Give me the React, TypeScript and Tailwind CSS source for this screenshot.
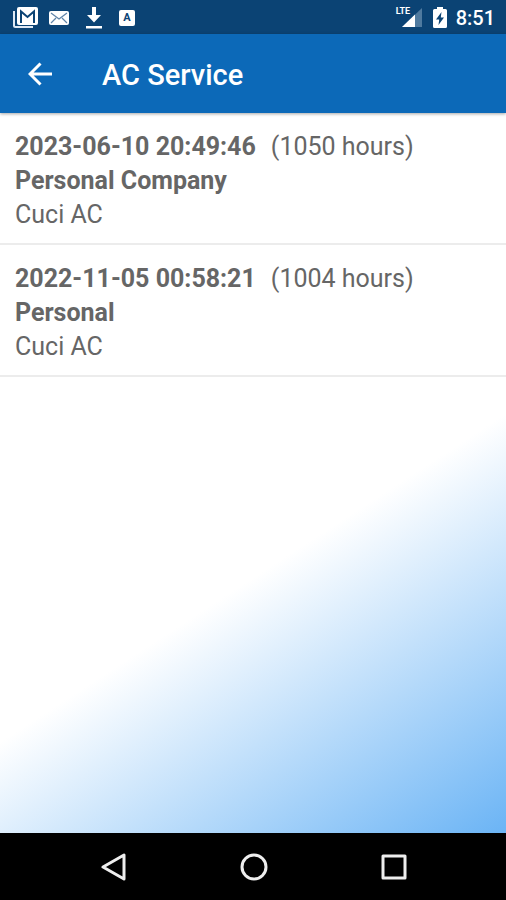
type Service = {
    date: string;
    hours: number;
    customer: string;
    job: string;
};

const services: Service[] = [
    {
        date: '2023-06-10 20:49:46',
        hours: 1050,
        customer: 'Personal Company',
        job: 'Cuci AC',
    },
    {
        date: '2022-11-05 00:58:21',
        hours: 1004,
        customer: 'Personal',
        job: 'Cuci AC',
    },
];

function StatusBar() {
    return (
        <div className="flex h-[34px] shrink-0 items-center justify-between bg-[#0b4374] pt-px pr-[11px] pl-[13px] text-white">
            <div className="flex items-center">
                <svg className="h-[22px] w-[25px]" viewBox="0 0 25 22">
                    <path
                        d="M1 4v14.500q0 1.500 1.500 1.500H20"
                        fill="none"
                        stroke="#dfe9f5"
                        strokeWidth="2"
                    />
                    <rect x="4" y="0" width="21" height="18" rx="2" fill="#fff" />
                    <path
                        d="M8 16V4.500l6.500 5.500L21 4.500V16"
                        fill="none"
                        stroke="#0b4374"
                        strokeWidth="2"
                    />
                </svg>
                <svg
                    className="ml-[11px] h-[14px] w-5"
                    viewBox="0 0 20 14"
                >
                    <rect width="20" height="14" rx="2" fill="#fff" />
                    <path
                        d="M2 2l8 6 8-6M2 12l5-5M18 12l-5-5"
                        fill="none"
                        stroke="#5f84a8"
                        strokeWidth="1.200"
                    />
                </svg>
                <svg
                    className="ml-4 h-[22px] w-[18px]"
                    viewBox="0 0 18 22"
                    fill="#fff"
                >
                    <path d="M7 0h4v8h5l-7 7.500L2 8h5zM1 19h16v2.500H1z" />
                </svg>
                <span className="ml-4 flex size-4 items-center justify-center rounded-xs bg-white text-[11px] leading-none font-bold text-[#0b4374]">
                    A
                </span>
            </div>
            <div className="flex items-center">
                <div className="relative">
                    <svg className="h-[19px] w-[26px]" viewBox="0 0 26 19">
                        <path d="M26 0v19H6z" fill="#4f7a9f" />
                        <path d="M19 6.500V19H6z" fill="#fff" />
                    </svg>
                    <span className="absolute -top-px left-0 bg-[#0b4374] text-[9px] leading-none font-bold">
                        LTE
                    </span>
                </div>
                <svg
                    className="ml-[11px] h-[21px] w-[14px]"
                    viewBox="0 0 14 21"
                >
                    <path
                        d="M4 0h6v2h2.500Q14 2 14 3.500v16q0 1.500-1.500 1.500h-11Q0 21 0 19.500v-16Q0 2 1.500 2H4z"
                        fill="#fff"
                    />
                    <path d="M8.500 5L3 12.500h3.200L5.500 18 11 10.500H7.800z" fill="#0b4374" />
                </svg>
                <span className="ml-[9px] text-[20px] leading-none font-medium">
                    8:51
                </span>
            </div>
        </div>
    );
}

function Header() {
    return (
        <header className="z-10 flex h-[79px] shrink-0 items-center bg-[#0c69b8] pl-7 text-white shadow-[0_1px_3px_rgba(0,0,0,0.35)]">
            <button type="button" aria-label="Back">
                <svg
                    className="size-6"
                    viewBox="0 0 24 24"
                    fill="none"
                    stroke="currentColor"
                    strokeWidth="3"
                >
                    <path d="M12.500 1.500L2 12l10.500 10.500M2 12h22" />
                </svg>
            </button>
            <h1 className="ml-[50px] pt-0.5 text-[29px] leading-9 font-medium">
                AC Service
            </h1>
        </header>
    );
}

function ServiceItem({ date, hours, customer, job }: Service) {
    return (
        <li className="border-b-2 border-[#ececec] bg-white px-[15px] pt-[17px] pb-[11px] text-[25px] leading-[34px] text-[#666]">
            <div className="flex gap-[15px]">
                <span className="font-bold">{date}</span>
                <span>({hours} hours)</span>
            </div>
            <p className="font-bold">{customer}</p>
            <p>{job}</p>
        </li>
    );
}

function NavigationBar() {
    return (
        <nav className="flex h-[67px] shrink-0 items-center justify-around bg-black pr-[42px] pl-11 text-[#eee]">
            <button type="button" aria-label="Back">
                <svg
                    className="size-7"
                    viewBox="0 0 28 28"
                    fill="none"
                    stroke="currentColor"
                    strokeWidth="3"
                    strokeLinejoin="round"
                >
                    <path d="M24 2v24L3 14z" />
                </svg>
            </button>
            <button type="button" aria-label="Home">
                <svg
                    className="size-7"
                    viewBox="0 0 28 28"
                    fill="none"
                    stroke="currentColor"
                    strokeWidth="3"
                >
                    <circle cx="14" cy="14" r="12" />
                </svg>
            </button>
            <button type="button" aria-label="Recent apps">
                <svg
                    className="size-7"
                    viewBox="0 0 28 28"
                    fill="none"
                    stroke="currentColor"
                    strokeWidth="3"
                    strokeLinejoin="round"
                >
                    <rect x="3" y="3" width="22" height="22" />
                </svg>
            </button>
        </nav>
    );
}

export default function App() {
    return (
        <div className="flex min-h-screen flex-col font-[Roboto,sans-serif]">
            <StatusBar />
            <Header />
            <main className="flex-1 bg-[linear-gradient(147deg,#fff_60%,#6bb4f5_100%)]">
                <ul>
                    {services.map((service) => (
                        <ServiceItem key={service.date} {...service} />
                    ))}
                </ul>
            </main>
            <NavigationBar />
        </div>
    );
}
